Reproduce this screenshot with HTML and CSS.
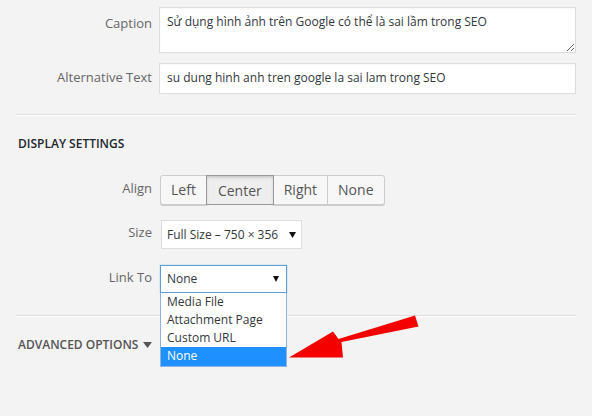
FILE: index.html
```html
<!DOCTYPE html>
<html lang="vi">
<head>
<meta charset="utf-8">
<title>Attachment Display Settings</title>
<link rel="stylesheet" href="styles.css">
</head>
<body>
<div class="panel">
  <div class="row row-caption">
    <label class="label label-caption">Caption</label>
    <textarea class="field textarea" readonly>Sử dụng hình ảnh trên Google có thể là sai lầm trong SEO</textarea>
  </div>
  <div class="row row-alt">
    <label class="label label-alt">Alternative Text</label>
    <div class="field input">su dung hinh anh tren google la sai lam trong SEO</div>
  </div>
  <div class="sep sep-first"></div>
  <h2 class="heading">Display Settings</h2>
  <div class="row row-align">
    <label class="label label-align">Align</label>
    <div class="btn-group">
      <span class="btn">Left</span>
      <span class="btn btn-active"><span class="btn-text">Center</span></span>
      <span class="btn">Right</span>
      <span class="btn">None</span>
    </div>
  </div>
  <div class="row row-size">
    <label class="label label-size">Size</label>
    <div class="select select-size">
      <span class="select-value">Full Size – 750 × 356</span>
      <svg class="caret" width="7" height="6" viewBox="0 0 7 6"><polygon points="0,0 7,0 3.5,6" fill="#111"/></svg>
    </div>
  </div>
  <div class="row row-link">
    <label class="label label-link">Link To</label>
    <div class="select-wrap">
      <div class="select select-link">
        <span class="select-value">None</span>
        <svg class="caret" width="6" height="6" viewBox="0 0 6 6"><polygon points="0,0 6,0 3,6" fill="#111"/></svg>
      </div>
      <ul class="dropdown">
        <li class="option">Media File</li>
        <li class="option">Attachment Page</li>
        <li class="option">Custom URL</li>
        <li class="option option-selected">None</li>
      </ul>
    </div>
  </div>
  <div class="sep sep-second"></div>
  <h2 class="heading heading-advanced">Advanced Options
    <svg class="adv-caret" width="9" height="6" viewBox="0 0 9 6"><polygon points="0,0 9,0 4.5,6" fill="#555"/></svg>
  </h2>
</div>
<svg class="pointer-arrow" width="592" height="416" viewBox="0 0 592 416">
  <polygon points="289,357.5 343,357.5 341.5,342 418.5,326.5 415,315.5 338.5,339 333,331.5" fill="#f40000"/>
</svg>
</body>
</html>
```

FILE: styles.css
```css
html, body {
  margin: 0;
  padding: 0;
}
body {
  background: #f3f3f3;
  font-family: "Open Sans", "Liberation Sans", sans-serif;
  font-size: 13px;
  line-height: 18px;
  color: #32373c;
  width: 592px;
  height: 416px;
  overflow: hidden;
  position: relative;
}
.panel {
  padding: 7px 16px 0 16px;
}
.row {
  display: flex;
  align-items: flex-start;
  gap: 7px;
}
.label {
  flex: 0 0 136px;
  text-align: right;
  color: #666;
}
.label-caption { padding-top: 7px; }
.label-alt { padding-top: 5px; }
.label-align { padding-top: 4px; }
.label-size { padding-top: 3px; }
.label-link { padding-top: 3px; }

.field {
  box-sizing: border-box;
  width: 417px;
  background: #fff;
  border: 1px solid #ddd;
  box-shadow: inset 0 1px 2px rgba(0,0,0,.04);
  font-family: "Open Sans", "Liberation Sans", sans-serif;
  font-size: 12px;
  line-height: 18px;
  color: #32373c;
}
.textarea {
  display: block;
  height: 46px;
  margin: 0;
  padding: 5px 7px;
  resize: vertical;
  outline: none;
}
.row-alt { margin-top: 10px; }
.input {
  height: 31px;
  padding: 5px 7px;
}
.sep {
  height: 0;
  border-top: 1px solid #ddd;
  box-shadow: 0 1px 0 #fff;
}
.sep-first { margin-top: 20px; }
.sep-second { margin-top: 22px; }
.heading {
  margin: 20px 0 0 2px;
  font-size: 12px;
  line-height: 18px;
  font-weight: 600;
  text-transform: uppercase;
  color: #23282d;
}
.heading-advanced {
  color: #555;
  display: flex;
  align-items: center;
  gap: 5px;
}
.adv-caret { display: block; }

.row-align { margin-top: 22px; }
.btn-group {
  display: flex;
  margin-left: 1px;
}
.btn {
  box-sizing: border-box;
  height: 30px;
  line-height: 28px;
  font-size: 14px;
  padding: 0 10px;
  border: 1px solid #ccc;
  margin-left: -1px;
  background: #f7f7f7;
  box-shadow: 0 1px 0 #ccc;
  color: #555;
  text-align: center;
}
.btn:first-child { margin-left: 0; border-radius: 3px 0 0 3px; }
.btn:last-child { border-radius: 0 3px 3px 0; }
.btn-active {
  background: #eee;
  border-color: #999;
  box-shadow: inset 0 2px 5px -3px rgba(0,0,0,.5);
  position: relative;
  z-index: 1;
  padding: 0 11px;
}
.btn-text {
  display: inline-block;
  transform: translateY(1px);
}

.row-size { margin-top: 15px; }
.select {
  box-sizing: border-box;
  background: #fff;
  border: 1px solid #ddd;
  display: flex;
  align-items: center;
  justify-content: space-between;
  color: #32373c;
  font-size: 12px;
}
.select-size {
  margin-left: 2px;
  width: 141px;
  height: 29px;
  padding: 0 5px 0 5px;
}
.select-wrap {
  position: relative;
  margin-left: 1px;
}
.row-link { margin-top: 16px; }
.select-link {
  width: 127px;
  height: 28px;
  padding: 0 7px 0 6px;
  border-color: #5b9dd9;
  box-shadow: 0 0 1px rgba(30,140,190,.6);
}
.caret { display: block; }
.dropdown {
  position: absolute;
  top: 28px;
  left: 0;
  box-sizing: border-box;
  width: 127px;
  margin: 0;
  padding: 0;
  list-style: none;
  background: #fff;
  border: 1px solid #8fb3de;
  border-top: 0;
  z-index: 5;
  font-size: 12px;
}
.option {
  height: 18px;
  line-height: 18px;
  padding: 0 6px;
  color: #32373c;
  white-space: nowrap;
}
.option-selected {
  background: #1e90ff;
  color: #fff;
  height: 19px;
}
.pointer-arrow {
  position: absolute;
  left: 0;
  top: 0;
  pointer-events: none;
  z-index: 10;
}
```
